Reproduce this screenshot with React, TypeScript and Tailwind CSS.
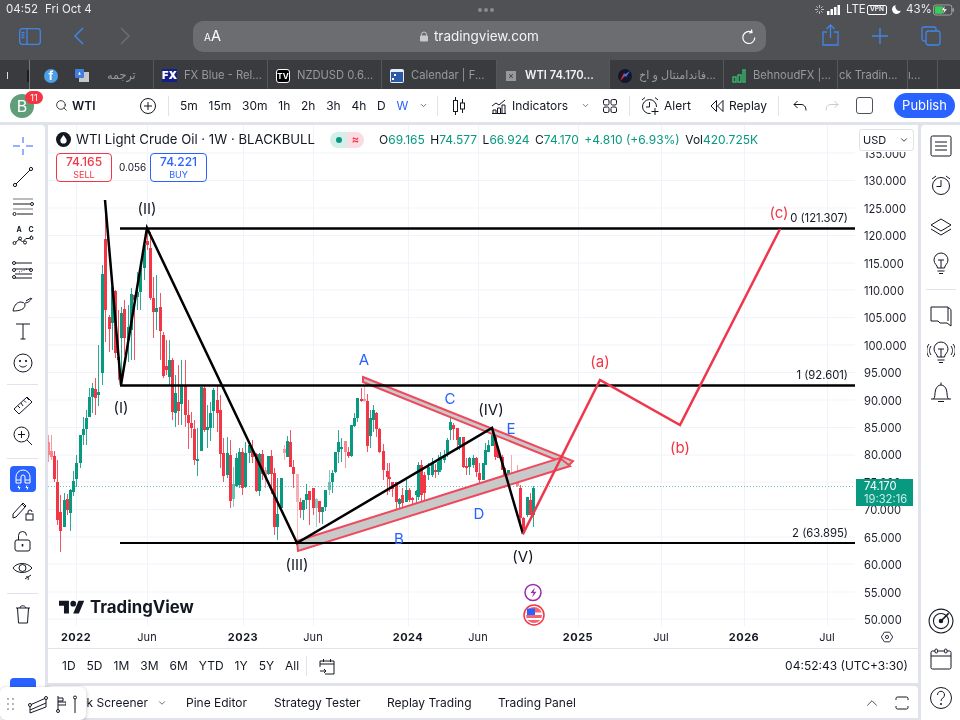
import { ReactNode } from "react";
import { ChevronDown, ChevronUp, Search } from "lucide-react";

const BLUE = "#3f86e8";
const GREEN = "#089981";
const RED = "#f23645";

// x, wick top, body top, body bottom, wick bottom, colour, faded
type Candle = [number, number, number, number, number, "g" | "r", number?];

const CANDLES: Candle[] = [
  [48, 435, 442, 455, 462, "r", 0.6],
  [51, 435, 451, 457, 460, "r", 0.6],
  [54, 451, 456, 479, 482, "r"],
  [57, 460, 482, 520, 525, "r"],
  [60, 495, 512, 531, 552, "r"],
  [64, 493, 500, 527, 527, "g"],
  [67, 494, 499, 510, 515, "r"],
  [70, 489, 490, 513, 531, "g"],
  [73, 471, 481, 492, 496, "g"],
  [76, 455, 463, 479, 487, "g"],
  [80, 435, 435, 463, 468, "g"],
  [83, 417, 429, 435, 445, "g"],
  [86, 410, 418, 429, 445, "g"],
  [89, 388, 397, 417, 417, "g"],
  [92, 383, 388, 397, 413, "g"],
  [95, 378, 389, 398, 415, "r"],
  [98, 345, 392, 395, 406, "g"],
  [102, 265, 274, 373, 385, "g"],
  [105, 205, 239, 310, 342, "r"],
  [109, 315, 317, 329, 352, "r"],
  [112, 277, 287, 323, 350, "g"],
  [115, 290, 291, 353, 358, "r"],
  [118, 310, 357, 360, 380, "r"],
  [121, 307, 313, 338, 375, "g"],
  [124, 300, 309, 338, 355, "r"],
  [128, 305, 327, 340, 362, "g"],
  [131, 288, 294, 330, 360, "g"],
  [134, 295, 295, 300, 360, "r"],
  [137, 272, 292, 297, 310, "g"],
  [140, 265, 268, 292, 310, "g"],
  [144, 240, 245, 268, 280, "g"],
  [147, 228, 241, 245, 250, "r"],
  [150, 232, 248, 298, 300, "r"],
  [153, 277, 298, 312, 338, "r"],
  [156, 275, 308, 312, 330, "g"],
  [160, 293, 307, 331, 360, "r"],
  [163, 332, 335, 376, 378, "r"],
  [166, 340, 366, 370, 375, "r"],
  [169, 340, 360, 377, 385, "g"],
  [172, 358, 360, 412, 420, "r"],
  [175, 375, 393, 413, 427, "g"],
  [178, 365, 402, 411, 425, "r"],
  [181, 360, 386, 404, 425, "g"],
  [185, 360, 385, 415, 427, "r"],
  [188, 400, 415, 423, 449, "r"],
  [191, 412, 423, 428, 438, "r"],
  [194, 420, 429, 460, 465, "r"],
  [197, 428, 459, 461, 476, "g"],
  [201, 387, 387, 451, 451, "g"],
  [204, 386, 388, 430, 432, "r"],
  [207, 405, 427, 430, 448, "g"],
  [210, 402, 413, 428, 441, "g"],
  [213, 388, 390, 411, 428, "g"],
  [217, 385, 400, 413, 432, "r"],
  [220, 395, 410, 454, 468, "r"],
  [223, 438, 453, 476, 482, "r"],
  [227, 437, 453, 475, 478, "g"],
  [230, 440, 455, 501, 508, "r"],
  [233, 467, 484, 499, 507, "g", 0.6],
  [236, 453, 458, 486, 487, "g"],
  [239, 448, 452, 485, 488, "g"],
  [242, 448, 452, 488, 495, "r"],
  [245, 442, 453, 487, 488, "g"],
  [249, 445, 445, 453, 463, "g"],
  [252, 440, 450, 457, 463, "r"],
  [256, 453, 454, 491, 492, "r"],
  [259, 453, 454, 491, 496, "g"],
  [262, 450, 454, 474, 480, "r"],
  [265, 467, 470, 477, 488, "r", 0.6],
  [268, 456, 456, 474, 475, "g"],
  [271, 450, 456, 474, 494, "r"],
  [274, 468, 473, 527, 535, "r"],
  [277, 478, 514, 527, 540, "g"],
  [281, 478, 478, 508, 509, "g"],
  [284, 445, 449, 453, 460, "r", 0.5],
  [287, 436, 441, 457, 455, "g"],
  [290, 430, 442, 467, 467, "r"],
  [293, 460, 467, 474, 488, "r"],
  [297, 474, 474, 502, 543, "r", 0.4],
  [300, 498, 502, 510, 518, "r"],
  [303, 500, 500, 510, 520, "g"],
  [306, 484, 494, 500, 509, "g"],
  [309, 491, 491, 500, 525, "r"],
  [313, 488, 488, 508, 515, "r"],
  [316, 498, 499, 508, 527, "g", 0.5],
  [319, 501, 501, 512, 523, "r"],
  [322, 507, 507, 512, 524, "g"],
  [325, 490, 490, 507, 511, "g"],
  [329, 470, 482, 490, 495, "g", 0.6],
  [332, 470, 473, 482, 493, "g"],
  [335, 452, 452, 472, 473, "g"],
  [338, 430, 442, 452, 463, "g"],
  [341, 438, 447, 449, 462, "g"],
  [345, 441, 441, 452, 468, "r", 0.6],
  [348, 447, 452, 456, 458, "r"],
  [351, 425, 425, 456, 457, "g"],
  [354, 413, 418, 426, 427, "g"],
  [357, 398, 398, 418, 422, "g"],
  [361, 388, 399, 401, 402, "r"],
  [364, 385, 399, 401, 402, "r", 0.5],
  [367, 394, 401, 446, 452, "r"],
  [370, 410, 418, 436, 448, "g"],
  [373, 405, 410, 420, 432, "g"],
  [376, 412, 413, 429, 437, "r"],
  [379, 428, 429, 452, 453, "r"],
  [383, 444, 451, 470, 480, "r"],
  [387, 463, 471, 477, 495, "r"],
  [389, 463, 477, 479, 492, "r"],
  [392, 482, 482, 489, 497, "r"],
  [396, 482, 482, 502, 513, "r"],
  [399, 498, 499, 504, 520, "g"],
  [402, 488, 495, 503, 508, "r"],
  [406, 480, 490, 502, 502, "g"],
  [409, 488, 490, 500, 502, "r"],
  [412, 497, 498, 500, 512, "r"],
  [416, 490, 491, 495, 505, "g"],
  [418, 462, 465, 497, 500, "g"],
  [421, 460, 465, 495, 503, "r"],
  [424, 472, 475, 493, 500, "r"],
  [428, 463, 467, 475, 480, "g"],
  [432, 458, 463, 475, 477, "g"],
  [435, 464, 470, 472, 478, "r"],
  [438, 455, 462, 472, 475, "g"],
  [440, 452, 457, 470, 472, "g"],
  [444, 450, 455, 460, 463, "g"],
  [447, 438, 440, 453, 457, "g"],
  [450, 417, 422, 430, 440, "g"],
  [453, 423, 425, 429, 440, "r"],
  [457, 428, 428, 440, 450, "r"],
  [459, 437, 437, 445, 450, "g"],
  [463, 437, 437, 467, 468, "r"],
  [466, 458, 466, 468, 475, "r"],
  [469, 457, 458, 467, 475, "g"],
  [473, 455, 458, 465, 468, "g"],
  [476, 457, 458, 472, 477, "r"],
  [479, 463, 473, 480, 495, "r"],
  [483, 463, 463, 480, 480, "g"],
  [485, 443, 450, 465, 465, "g"],
  [488, 440, 445, 452, 452, "g"],
  [492, 433, 435, 446, 446, "g"],
  [495, 436, 437, 457, 460, "r"],
  [498, 447, 450, 458, 458, "r"],
  [502, 455, 457, 470, 470, "r"],
  [504, 467, 468, 487, 488, "r"],
  [508, 470, 470, 485, 485, "g"],
  [511, 455, 473, 478, 475, "r", 0.5],
  [514, 473, 477, 482, 484, "r"],
  [517, 465, 477, 486, 487, "r", 0.6],
  [520, 485, 488, 518, 527, "r"],
  [523, 517, 518, 533, 535, "r"],
  [527, 497, 497, 515, 517, "g"],
  [530, 493, 500, 515, 515, "r"],
  [533, 486, 488, 515, 527, "g"],
];

const PRICES = [
  "135.000", "130.000", "125.000", "120.000", "115.000", "110.000", "105.000", "100.000", "95.000",
  "90.000", "85.000", "80.000", "75.000", "70.000", "65.000", "60.000", "55.000", "50.000",
];

const GRID_Y = [153, 180.5, 208, 235.5, 263, 290, 317.5, 345, 372.5, 400, 427.5, 455, 482, 509.5, 537, 564, 592, 619];
const GRID_X = [76, 147, 243, 313, 408, 478, 578, 661, 744, 827];

const TIME_LABELS: [number, string, boolean][] = [
  [76, "2022", true], [147, "Jun", false], [243, "2023", true], [313, "Jun", false], [408, "2024", true],
  [478, "Jun", false], [578, "2025", true], [661, "Jul", false], [744, "2026", true], [827, "Jul", false],
];

const NOTES: [number, number, string, string][] = [
  [121, 413, "(I)", "#131722"], [147, 214, "(II)", "#131722"], [297, 570, "(III)", "#131722"],
  [491, 415, "(IV)", "#131722"], [523, 562, "(V)", "#131722"],
  [364, 365, "A", "#2962ff"], [399, 544, "B", "#2962ff"], [450, 404, "C", "#2962ff"],
  [479, 519, "D", "#2962ff"], [511, 434, "E", "#2962ff"],
  [600, 367, "(a)", RED], [680, 453, "(b)", RED], [779, 218, "(c)", RED],
];

function Ico({ children, className = "" }: { children: ReactNode; className?: string }) {
  return (
    <svg viewBox="0 0 24 24" fill="none" stroke="currentColor" strokeWidth="1" className={`h-[24px] w-[24px] shrink-0 text-[#131722] ${className}`}>
      {children}
    </svg>
  );
}

function Candles() {
  return (
    <>
      {CANDLES.map(([x, wt, bt, bb, wb, c, faded], i) => {
        const col = c === "g" ? GREEN : RED;
        return (
          <g key={i} fill={col} opacity={faded ?? 1}>
            <rect x={x} y={wt} width="1" height={wb - wt} opacity="0.85" />
            <rect x={x - 1} y={bt} width="3" height={Math.max(bb - bt, 1)} />
          </g>
        );
      })}
    </>
  );
}

function Chart() {
  return (
    <svg viewBox="48 125 807 524" className="h-[524px] w-[807px] shrink-0">
      {GRID_Y.map((y) => (
        <line key={y} x1="48" x2="855" y1={y} y2={y} stroke="#f0f3fa" />
      ))}
      {GRID_X.map((x) => (
        <line key={x} x1={x + 0.5} x2={x + 0.5} y1="125" y2="626" stroke="#f0f3fa" />
      ))}
      <line x1="48" x2="855" y1="486.5" y2="486.5" stroke={GREEN} strokeOpacity="0.6" strokeDasharray="1 2" />
      <Candles />

      <polygon points="363,377 573,461 569,465 363,382" fill="#c9c9c9" stroke="#f0485c" strokeWidth="2" />
      <polygon points="297,541 560,458 570,466 298,551" fill="#c9c9c9" stroke="#f0485c" strokeWidth="2" />

      <line x1="120" x2="856" y1="228.5" y2="228.5" stroke="#000" strokeWidth="2.5" />
      <line x1="120" x2="856" y1="385.5" y2="385.5" stroke="#000" strokeWidth="2.5" />
      <line x1="120" x2="856" y1="543" y2="543" stroke="#000" strokeWidth="2" />
      <polyline points="105,200 121,385 147,228 297,543 492,428 523,534" fill="none" stroke="#000" strokeWidth="2.5" />
      <polyline points="523,534 600,380 680,425 780,229" fill="none" stroke="#f0364c" strokeWidth="2.5" />

      <g fontSize="11.3" fill="#131722" textAnchor="end">
        <text x="848" y="222">0 (121.307)</text>
        <text x="848" y="379">1 (92.601)</text>
        <text x="848" y="537">2 (63.895)</text>
      </g>
      <g fontSize="15" textAnchor="middle">
        {NOTES.map(([x, y, t, c]) => (
          <text key={t} x={x} y={y} fill={c}>{t}</text>
        ))}
      </g>

      {/* watermark */}
      <g transform="translate(59 598) scale(0.71)" fill="#131722">
        <path d="M14 22H7V11H0V4h14v18zM28 22h-8l7.5-18h8L28 22z" />
        <circle cx="20" cy="8" r="4" />
      </g>
      <text x="90" y="613" fontSize="16.8" fontWeight="700" fill="#131722">TradingView</text>

      {/* events */}
      <circle cx="533" cy="592.5" r="8" fill="#fff" stroke="#9c27b0" strokeWidth="1.5" />
      <path d="M535 587.5l-4.5 5.5h3l-1.5 4.5 4.5-5.7h-3z" fill="#9c27b0" />
      <circle cx="534" cy="615" r="10" fill="#fff" stroke={RED} strokeWidth="1.5" />
      <circle cx="534" cy="615" r="8" fill="#f4656f" />
      <rect x="526" y="612.5" width="16" height="2.5" fill="#fff" />
      <rect x="526" y="618" width="16" height="2" fill="#fff" />
      <rect x="527" y="608.5" width="8" height="6.5" fill="#2962ff" />

      <g fontSize="11" fill="#131722" textAnchor="middle">
        {TIME_LABELS.map(([x, t, bold]) => (
          <text key={x} x={x} y="641" fontWeight={bold ? 700 : 400} letterSpacing={bold ? 0.5 : 0}>{t}</text>
        ))}
      </g>
    </svg>
  );
}

function PriceAxis() {
  return (
    <div className="relative h-[524px] w-[63px] shrink-0 overflow-hidden">
      <div className="flex flex-col pl-[9px] pt-[16px] text-[11.2px] leading-[27.42px] text-[#1e222d]">
        {PRICES.map((p) => (
          <span key={p} className="h-[27.42px]">{p}</span>
        ))}
      </div>
      <div className="absolute left-0 top-0 h-[27px] w-full bg-white" />
      <div className="absolute left-[4px] top-[4px] flex h-[22px] w-[55px] items-center justify-between rounded-[3px] border border-[#e0e3eb] bg-white pl-[3px] pr-[4px] text-[11px] text-[#131722]">
        USD
        <ChevronDown size={10} strokeWidth={2} />
      </div>
      <div className="absolute left-[1px] top-[354px] flex h-[27px] w-[57px] flex-col bg-[#089981] pl-[8px] text-[11.2px] leading-[13px] text-white">
        <span className="mt-[1px]">74.170</span>
        <span className="text-[#c9ece5]">19:32:16</span>
      </div>
      <svg viewBox="0 0 16 16" className="absolute left-[25px] top-[505px] h-[14px] w-[14px]" fill="none" stroke="#131722" strokeWidth="1">
        <path d="M5 2.500h6L14.500 8 11 13.500H5L1.500 8z" />
        <circle cx="8" cy="8" r="1.800" />
      </svg>
    </div>
  );
}

function LeftTools() {
  return (
    <div className="flex w-[45px] shrink-0 flex-col items-center rounded-tr-[4px] bg-white">
      <Ico className="mt-[9px] !text-[#2962ff]"><path d="M12 3v6M12 15v6M2 12h7M15 12h7" /></Ico>
      <Ico className="mt-[7px]"><path d="M5 19L19 5" /><circle cx="4" cy="20" r="1.600" /><circle cx="20" cy="4" r="1.600" /></Ico>
      <Ico className="mt-[6px]"><path d="M2 4h20M2 14h20" stroke="#777" /><path d="M2 9h17M6 19h16" /><circle cx="21" cy="9" r="1.500" /><circle cx="3.500" cy="19" r="1.500" /></Ico>
      <div className="relative mt-[6px] h-[24px] w-[24px]">
        <Ico><path d="M4.500 17.500L8.500 14l3 3 3.500-3.500 3.500 0 2-3" /><circle cx="3.500" cy="18" r="1.500" /><circle cx="9" cy="13.500" r="1.500" /><circle cx="14" cy="17.500" r="1.500" /><circle cx="20.500" cy="13" r="1.500" /></Ico>
        <span className="absolute left-[6px] top-[1px] text-[7px] font-bold leading-[8px] text-[#131722]">A</span>
        <span className="absolute left-[18px] top-[1px] text-[7px] font-bold leading-[8px] text-[#131722]">C</span>
      </div>
      <Ico className="mt-[9px]"><path d="M4 5h17M4 11h16M4 16h17M4 20h17" /><path d="M8 14l8-3" strokeDasharray="1 1.500" /><circle cx="3" cy="5" r="1.500" /><circle cx="3" cy="12" r="1.500" /><circle cx="20" cy="12" r="1.500" /><circle cx="3" cy="19" r="1.500" /></Ico>
      <Ico className="mt-[9px]"><path d="M2 20c1-5 3-8 7-9 3 0 5 1 5 3 0 4-5 6-12 6z" /><path d="M15 10l5-3M14 12c3 0 5-2 7-5" /></Ico>
      <Ico className="mt-[4px]"><path d="M5 5h14M12 5v15M9.500 20h5" /></Ico>
      <Ico className="mt-[8px]"><circle cx="12" cy="12" r="9" /><circle cx="9" cy="10" r="0.700" fill="currentColor" /><circle cx="15" cy="10" r="0.700" fill="currentColor" /><path d="M8.500 14.500c2 2 5 2 7 0" /></Ico>
      <div className="mt-[9px] h-px w-[31px] bg-[#e0e3eb]" />
      <Ico className="mt-[8px]"><path d="M3 16L16 4l5 5L8 21z" /><path d="M7 13l2 2M10 10l2 3M13 7.500l2 2M16 5l2 2" /></Ico>
      <Ico className="mt-[7px]"><circle cx="10.500" cy="10.500" r="7.500" /><path d="M16 16l5 5M10.500 7v7M7 10.500h7" /></Ico>
      <div className="mt-[10px] h-px w-[31px] bg-[#e0e3eb]" />
      <div className="mt-[7px] flex h-[26px] w-[26px] items-center justify-center rounded-[4px] bg-[#2962ff]">
        <Ico className="!text-white"><path d="M5 16V10a7 7 0 0114 0v6h-5v-6a2 2 0 00-4 0v6zM5 13h5M14 13h5M8 18.500l-1 2h2l-1 2M16 18.500l-1 2h2l-1 2" /></Ico>
      </div>
      <Ico className="mt-[6px]"><path d="M2 16L12 5l3 3L5 19l-3 1zM11 6l3 3" /><rect x="15" y="16" width="7" height="6" /><path d="M17 16v-2a2 2 0 014 0" /></Ico>
      <Ico className="mt-[7px]"><rect x="4" y="11" width="15" height="11" rx="2" /><path d="M7.500 11V6.500a4 4 0 018 0" /><path d="M11.500 15v2.500" strokeWidth="1.600" /></Ico>
      <Ico className="mt-[6px]"><path d="M2 9c4-6 14-6 19 0-5 6-15 6-19 0z" /><circle cx="11.500" cy="9" r="3.500" /><path d="M14 20l6-4M15 18c2-1 3 1 2 3" /></Ico>
      <div className="mt-[10px] h-px w-[31px] bg-[#e0e3eb]" />
      <Ico className="mt-[8px]"><path d="M5 6h14M9 6c0-3 5-3 6 0M6.500 6l1 15h9l1-15" /></Ico>
      <div className="mt-[52px] h-[20px] w-[26px] shrink-0 rounded-[4px] bg-[#2962ff]" />
    </div>
  );
}

function RightTools() {
  return (
    <div className="flex flex-1 flex-col items-center rounded-tl-[4px] bg-white pb-[10px]">
      <Ico className="mt-[9px]"><rect x="2" y="2" width="20" height="20" rx="1.500" /><path d="M6 8h12M6 12h12M6 16h12" /></Ico>
      <Ico className="mt-[15px]"><circle cx="12" cy="13" r="8.500" /><path d="M12 7v6.500H7.500M3 6l4-3M21 6l-4-3" /></Ico>
      <Ico className="mt-[17px]"><path d="M12 5l10 6-10 6-10-6z" /><path d="M2 15l10 6 10-6" /></Ico>
      <Ico className="mt-[13px]"><path d="M8.500 17c0-3-3.500-4-3.500-8a7 7 0 0114 0c0 4-3.500 5-3.500 8zM8.500 20h7M10 22.500h4M9 9h6M12 9v8" /></Ico>
      <div className="mt-[14px] h-px w-[30px] bg-[#e0e3eb]" />
      <Ico className="mt-[14px]"><path d="M2 17V3h17v14M2 17h7l2 2M19 4c2 0 3 1 3 3v15l-4-3h-7" /></Ico>
      <svg viewBox="0 0 28 24" fill="none" stroke="#131722" className="mt-[12px] h-[24px] w-[28px]">
        <path d="M10.500 17c0-3-3.500-4-3.500-8a7 7 0 0114 0c0 4-3.500 5-3.500 8zM10.500 20h7M12 22.500h4M11 9h6M14 9v8M4 6c-2 3-2 6 0 9M2 4c-3 4-3 9 0 13M24 6c2 3 2 6 0 9M26 4c3 4 3 9 0 13" />
      </svg>
      <Ico className="mt-[16px]"><path d="M2 19h20M4.500 19c2-2 1-5 2-9 1-3 3-5 5.500-5s4.500 2 5.500 5c1 4 0 7 2 9M9 21.500h6M12 5V2.500" /></Ico>
      <Ico className="mt-auto !h-[26px] !w-[26px]"><circle cx="12" cy="12" r="11" /><circle cx="12" cy="12" r="7" /><circle cx="12" cy="12" r="1.600" fill="currentColor" /><path d="M12 12l7-7" strokeWidth="1.500" /></Ico>
      <Ico className="mt-[13px]"><rect x="2" y="4" width="20" height="18" rx="1.500" /><path d="M2 9h20" /><rect x="6" y="2" width="2.500" height="4" rx="1.200" fill="#fff" /><rect x="15.500" y="2" width="2.500" height="4" rx="1.200" fill="#fff" /></Ico>
      <Ico className="mt-[15px]"><circle cx="12" cy="12" r="10.500" /><path d="M8.500 9c0-5 7-5 7 0 0 3-3.500 3-3.500 6" /><circle cx="12" cy="18" r="0.600" fill="currentColor" /></Ico>
    </div>
  );
}

function StatusBar() {
  return (
    <div className="flex h-[18px] items-center pt-[1px] text-[11.5px] text-[#eeeeef]">
      <span className="ml-[6px] w-[39px]">04:52</span>
      <span>Fri Oct 4</span>
      <div className="ml-[386px] flex gap-[2px]">
        <span className="h-[4px] w-[4px] rounded-full bg-[#8b8c90]" />
        <span className="h-[4px] w-[4px] rounded-full bg-[#8b8c90]" />
        <span className="h-[4px] w-[4px] rounded-full bg-[#8b8c90]" />
      </div>
      <div className="ml-auto mr-[5px] flex items-center text-[11.5px]">
        <svg viewBox="0 0 10 10" className="mr-[3px] h-[9px] w-[9px]" stroke="#ccc" strokeWidth="1">
          <path d="M5 0v3M5 7v3M0 5h3M7 5h3M1.500 1.500l2 2M6.500 6.500l2 2M8.500 1.500l-2 2M3.500 6.500l-2 2" />
        </svg>
        <svg viewBox="0 0 15 10" className="mr-[4px] h-[10px] w-[15px]" fill="#fff">
          <rect x="0" y="6" width="2.500" height="4" /><rect x="3.500" y="4" width="2.500" height="6" />
          <rect x="7" y="2" width="2.500" height="8" /><rect x="10.500" y="0" width="2.500" height="10" />
        </svg>
        <span className="w-[21px]">LTE</span>
        <span className="flex h-[10px] w-[20px] items-center justify-center rounded-[2px] border border-white text-[6.500px] font-bold">VPN</span>
        <svg viewBox="0 0 10 10" className="ml-[5px] mr-[5px] h-[9px] w-[9px]" fill="#fff">
          <path d="M4 0a5 5 0 105.800 6.500A5 5 0 014 0z" />
        </svg>
        <span className="w-[27px]">43%</span>
        <svg viewBox="0 0 24 12" className="h-[12px] w-[22px]" fill="none">
          <rect x="0.500" y="0.500" width="20" height="11" rx="2.500" stroke="#aaa" />
          <rect x="2" y="2" width="9" height="8" rx="1" fill="#3ccb5a" />
          <path d="M22 4v4" stroke="#aaa" strokeWidth="1.500" />
          <path d="M13 1l-4 5.500h3L10.500 11l5-6h-3z" fill="#fff" stroke="#505155" strokeWidth="0.500" />
        </svg>
      </div>
    </div>
  );
}

function SafariBar() {
  return (
    <div className="flex h-[42px] items-start text-[#fff]">
      <svg viewBox="0 0 22 17" className="ml-[19px] mt-[10px] h-[17px] w-[22px]" fill="none" stroke={BLUE} strokeWidth="1.300">
        <rect x="0.700" y="0.700" width="20.600" height="15.600" rx="2.500" />
        <path d="M8 1v15M2.500 4.500h3M2.500 7h3M2.500 9.500h3" />
      </svg>
      <svg viewBox="0 0 10 18" className="ml-[33px] mt-[9px] h-[18px] w-[10px]" fill="none" stroke={BLUE} strokeWidth="1.500">
        <path d="M9 1L1 9l8 8" />
      </svg>
      <svg viewBox="0 0 10 18" className="ml-[36px] mt-[9px] h-[18px] w-[10px]" fill="none" stroke="#6e6f73" strokeWidth="1.500">
        <path d="M1 1l8 8-8 8" />
      </svg>
      <div className="ml-[63px] mt-[3px] flex h-[31px] w-[573px] items-center rounded-[10px] bg-[#6c6d71] pl-[11px] pr-[9px]">
        <span className="text-[10px] leading-none">A</span>
        <span className="text-[14.500px] leading-none">A</span>
        <div className="ml-[199px] flex items-center gap-[6px] text-[13.500px] text-[#f4f4f4]">
          <svg viewBox="0 0 8 10" className="h-[11px] w-[8px]" fill="#c9c9cb">
            <rect x="0" y="4" width="8" height="6" rx="1" />
            <path d="M1.500 4.500V3a2.500 2.500 0 015 0v1.500" fill="none" stroke="#c9c9cb" strokeWidth="1" />
          </svg>
          tradingview.com
        </div>
        <svg viewBox="0 0 16 16" className="ml-auto h-[16px] w-[16px]" fill="none" stroke="#fff" strokeWidth="1.200">
          <path d="M13.800 8.500a6 6 0 11-3-5.200M10.500 0.500l.5 3-3 .5" />
        </svg>
      </div>
      <svg viewBox="0 0 17 22" className="ml-[56px] mt-[6px] h-[22px] w-[17px]" fill="none" stroke={BLUE} strokeWidth="1.300">
        <path d="M5 8H1v13h15V8h-4M8.500 14V1M4.500 5l4-4 4 4" />
      </svg>
      <svg viewBox="0 0 16 16" className="ml-[33px] mt-[10px] h-[16px] w-[16px]" fill="none" stroke={BLUE} strokeWidth="1.400">
        <path d="M8 0v16M0 8h16" />
      </svg>
      <svg viewBox="0 0 20 20" className="ml-[33px] mt-[8px] h-[20px] w-[20px]" fill="none" stroke={BLUE} strokeWidth="1.300">
        <rect x="5" y="5" width="14" height="14" rx="2.500" />
        <path d="M5 15H3a2 2 0 01-2-2V3a2 2 0 012-2h10a2 2 0 012 2v2" />
      </svg>
    </div>
  );
}

function Tab({ w, active, icon, children }: { w: string; active?: boolean; icon?: ReactNode; children: ReactNode }) {
  return (
    <div className={`${w} flex h-full shrink-0 items-center gap-[7px] overflow-hidden whitespace-nowrap border-r border-[#56575b] pl-[8px] pt-[2px] ${active ? "bg-[#505155] font-semibold text-[#f1f1f2]" : "text-[#98999c]"}`}>
      {icon}
      {children}
    </div>
  );
}

function TabsBar() {
  return (
    <div className="flex h-[29px] items-center bg-[#3a3b3f] text-[11.2px]">
      <div className="flex h-full w-[30px] shrink-0 items-center border-r border-[#77787c] pt-[2px]">
        <span className="ml-[7px] h-[7px] w-px bg-[#ddd]" />
        <span className="ml-[19px] h-[12px] w-[2px] bg-[#1b1c20]" />
      </div>
      <div className="flex h-full w-[124px] shrink-0 items-center border-r border-[#56575b] pt-[2px]">
        <span className="ml-[14px] flex h-[14px] w-[14px] items-center justify-center rounded-full bg-[#4b9ee8] text-[12px] font-bold text-white">f</span>
        <svg viewBox="0 0 14 14" className="ml-[17px] h-[14px] w-[14px]">
          <rect x="4" y="3" width="10" height="10" fill="#c7c8ca" />
          <rect x="0" y="0" width="9" height="9" rx="1" fill="#3f7fe0" />
          <path d="M3 5h3M4.500 3v3" stroke="#fff" strokeWidth="0.800" />
        </svg>
        <span className="ml-[18px] text-[#98999c]">ترجمه</span>
      </div>
      <Tab w="w-[114px]" icon={<span className="flex h-[13px] w-[15px] shrink-0 items-center justify-center bg-[#14208a] text-[11px] font-black text-white">FX</span>}>FX Blue - Rel...</Tab>
      <Tab w="w-[114px]" icon={<span className="flex h-[14px] w-[14px] shrink-0 items-center justify-center rounded-[3px] border border-white bg-black text-[8px] font-bold text-white">TV</span>}>NZDUSD 0.6...</Tab>
      <Tab
        w="w-[115px]"
        icon={
          <svg viewBox="0 0 14 14" className="h-[14px] w-[14px] shrink-0">
            <rect width="14" height="14" rx="2" fill="#e8eef7" />
            <rect x="1" y="3" width="12" height="10" fill="#2a5aa8" />
            <rect x="4" y="5" width="2" height="2" fill="#fff" />
            <rect x="2" y="9" width="2" height="2" fill="#fff" />
          </svg>
        }
      >
        Calendar | F...
      </Tab>
      <Tab
        w="w-[113px]"
        active
        icon={
          <span className="ml-[1px] mr-[2px] flex h-[10px] w-[10px] shrink-0 items-center justify-center bg-[#98999c] text-[9px] font-normal leading-none text-[#3a3b3f]">×</span>
        }
      >
        WTI 74.170...
      </Tab>
      <Tab
        w="w-[114px]"
        icon={
          <svg viewBox="0 0 14 14" className="h-[14px] w-[14px] shrink-0">
            <circle cx="7" cy="7" r="7" fill="#16162e" />
            <path d="M2 12L8 6l-2-2z" fill="#e5343f" />
            <path d="M12 2L8 8 6 6z" fill="#2f7fe8" />
          </svg>
        }
      >
        فاندامنتال و اخ...
      </Tab>
      <Tab
        w="w-[114px]"
        icon={
          <svg viewBox="0 0 14 14" className="h-[14px] w-[14px] shrink-0" fill="none" stroke="#39b26a" strokeWidth="1.500">
            <path d="M1 8h3v5H1zM6 6h3v7H6zM11 1h2v12h-2z" />
          </svg>
        }
      >
        BehnoudFX |...
      </Tab>
      <div className="flex h-full w-[70px] shrink-0 items-center overflow-hidden border-r border-[#56575b] pl-[1px] pt-[2px] text-[#98999c]">ck Tradin...</div>
      <div className="flex h-full w-[30px] shrink-0 items-center overflow-hidden border-r border-[#56575b] pt-[2px] text-[#98999c]">ı...</div>
    </div>
  );
}

function TVHeader() {
  return (
    <div className="flex h-[33px] items-center bg-white text-[12px] text-[#131722]">
      <div className="relative ml-[10px] flex h-[24px] w-[24px] shrink-0 items-center justify-center rounded-full bg-[#5f9e78] text-[16px] text-white">
        B
        <span className="absolute left-[15px] top-[-3px] flex h-[13px] w-[18px] items-center justify-center rounded-full bg-[#f23645] text-[9px] leading-none text-white">11</span>
      </div>
      <Search size={13} strokeWidth={1.5} className="ml-[21px]" />
      <span className="ml-[4px] w-[24px] font-semibold">WTI</span>
      <svg viewBox="0 0 16 16" className="ml-[44px] h-[16px] w-[16px]" fill="none" stroke="#131722">
        <circle cx="8" cy="8" r="7.500" />
        <path d="M8 4v8M4 8h8" />
      </svg>
      <div className="ml-[12px] h-[20px] w-px bg-[#e0e3eb]" />
      <div className="ml-[11px] flex w-[249px] items-center gap-[10.750px]">
        <span>5m</span><span>15m</span><span>30m</span><span>1h</span><span>2h</span><span>3h</span><span>4h</span><span>D</span>
        <span className="text-[#2962ff]">W</span>
        <ChevronDown size={9} strokeWidth={1.5} />
      </div>
      <div className="ml-[8px] h-[20px] w-px bg-[#e0e3eb]" />
      <svg viewBox="0 0 14 18" className="ml-[14px] h-[18px] w-[14px]" fill="none" stroke="#131722">
        <path d="M3.500 0v18M10.500 2v14" />
        <rect x="1.500" y="3.500" width="4" height="11" fill="#fff" />
        <rect x="8.500" y="6" width="4" height="6" fill="#fff" />
      </svg>
      <svg viewBox="0 0 16 16" className="ml-[25px] h-[16px] w-[16px]" fill="none" stroke="#131722">
        <path d="M1 8l4-3 3 2 6-5M1 15.500h14M2 15v-3h3v3M6.500 15v-5h3v5M11 15V7h3v8" />
      </svg>
      <span className="ml-[5px] w-[57px]">Indicators</span>
      <ChevronDown size={9} strokeWidth={1.5} className="ml-[12px]" />
      <svg viewBox="0 0 14 14" className="ml-[13px] h-[14px] w-[14px]" fill="none" stroke="#131722">
        <rect x="0.500" y="0.500" width="5.500" height="5.500" rx="1.500" /><rect x="8" y="0.500" width="5.500" height="5.500" rx="1.500" />
        <rect x="0.500" y="8" width="5.500" height="5.500" rx="1.500" /><rect x="8" y="8" width="5.500" height="5.500" rx="1.500" />
      </svg>
      <div className="ml-[12px] h-[20px] w-px bg-[#e0e3eb]" />
      <svg viewBox="0 0 18 18" className="ml-[11px] h-[18px] w-[18px]" fill="none" stroke="#131722">
        <path d="M15.500 10a7 7 0 10-6 6.500M8.500 5v5H5M1 3l3-2.500M17 3L14 .5M14 11v7M10.500 14.500h7" />
      </svg>
      <span className="ml-[5px] w-[27px]">Alert</span>
      <svg viewBox="0 0 14 14" className="ml-[19px] h-[14px] w-[14px]" fill="none" stroke="#131722">
        <path d="M6.500 1.500L1 7l5.500 5.500zM13 1.500L7.500 7l5.500 5.500z" />
      </svg>
      <span className="ml-[5px] w-[39px]">Replay</span>
      <div className="ml-[10px] h-[20px] w-px bg-[#e0e3eb]" />
      <svg viewBox="0 0 14 12" className="ml-[14px] h-[12px] w-[14px]" fill="none" stroke="#131722">
        <path d="M4.500 1L1 4.500 4.500 8M1 4.500h7c3 0 5 2 5 6" />
      </svg>
      <svg viewBox="0 0 14 12" className="ml-[18px] h-[12px] w-[14px]" fill="none" stroke="#c9cbd1">
        <path d="M9.500 1L13 4.500 9.500 8M13 4.500H6c-3 0-5 2-5 6" />
      </svg>
      <span className="ml-[17px] h-[17px] w-[17px] rounded-[3px] border border-[#50535e]" />
      <span className="ml-auto mr-[5px] flex h-[25px] w-[61px] shrink-0 items-center justify-center rounded-full bg-[#2962ff] text-[13px] text-white">Publish</span>
    </div>
  );
}

function Legend() {
  return (
    <div className="absolute left-[8px] top-[6px] text-[#131722]">
      <div className="flex h-[17px] items-center text-[13.200px]">
        <span className="flex h-[15px] w-[15px] items-center justify-center rounded-full bg-[#131722]">
          <svg viewBox="0 0 10 10" className="h-[9px] w-[9px]" fill="#fff">
            <path d="M5 0c2 3 3.500 4.500 3.500 6a3.500 3.500 0 01-7 0C1.500 4.500 3 3 5 0z" />
          </svg>
        </span>
        <span className="ml-[5px] w-[254px] whitespace-nowrap">WTI Light Crude Oil · 1W · BLACKBULL</span>
        <span className="flex h-[16px] w-[17px] items-center justify-center rounded-l-full bg-[#d4efe9]">
          <span className="h-[6px] w-[6px] rounded-full bg-[#089981]" />
        </span>
        <span className="flex h-[16px] w-[17px] items-center justify-center rounded-r-full bg-[#fbdce2] text-[11px] font-bold text-[#f23645]">≈</span>
        <div className="ml-[15px] flex gap-[5.500px] whitespace-nowrap text-[12px]">
          <span>O<span className="text-[#089981]">69.165</span></span>
          <span>H<span className="text-[#089981]">74.577</span></span>
          <span>L<span className="text-[#089981]">66.924</span></span>
          <span>C<span className="text-[#089981]">74.170</span></span>
          <span className="text-[#089981]">+4.810 (+6.93%)</span>
          <span>Vol<span className="text-[#089981]">420.725K</span></span>
        </div>
      </div>
      <div className="mt-[5px] flex items-center">
        <div className="flex h-[29px] w-[56px] flex-col items-center justify-center rounded-[4px] border border-[#f23645] bg-white leading-none text-[#f23645]">
          <span className="text-[12px] font-medium">74.165</span>
          <span className="mt-[2px] text-[9px]">SELL</span>
        </div>
        <span className="ml-[7px] w-[31px] text-[10px]">0.056</span>
        <div className="flex h-[29px] w-[57px] flex-col items-center justify-center rounded-[4px] border border-[#2962ff] bg-white leading-none text-[#2962ff]">
          <span className="text-[12px] font-medium">74.221</span>
          <span className="mt-[2px] text-[9px]">BUY</span>
        </div>
      </div>
    </div>
  );
}

function RangeBar() {
  return (
    <div className="flex h-[34px] items-center rounded-b-[4px] bg-white text-[12px] text-[#131722]">
      <div className="ml-[14px] flex w-[236px] gap-[11px]">
        <span>1D</span><span>5D</span><span>1M</span><span>3M</span><span>6M</span><span>YTD</span><span>1Y</span><span>5Y</span><span>All</span>
      </div>
      <div className="ml-[8px] h-[20px] w-px bg-[#e0e3eb]" />
      <svg viewBox="0 0 16 17" className="ml-[12px] h-[17px] w-[16px]" fill="none" stroke="#131722">
        <path d="M1 9V3h14v13H6M1 6h14M4.500 1v3M11.500 1v3M1 13h6M5 11l2 2-2 2" />
      </svg>
      <span className="ml-auto mr-[10px]">04:52:43 (UTC+3:30)</span>
    </div>
  );
}

function BottomBar() {
  return (
    <div className="flex h-[33px] items-center rounded-t-[4px] border-b border-[#e0e3eb] bg-white pl-[13px] pt-[1px] text-[12px] text-[#131722]">
      <span className="w-[86px] whitespace-nowrap">Stock Screener</span>
      <ChevronDown size={10} strokeWidth={1.5} className="ml-[10px]" />
      <span className="ml-[19px] w-[60px] whitespace-nowrap">Pine Editor</span>
      <span className="ml-[28px] w-[85px] whitespace-nowrap">Strategy Tester</span>
      <span className="ml-[28px] w-[82px] whitespace-nowrap">Replay Trading</span>
      <span className="ml-[29px] whitespace-nowrap">Trading Panel</span>
      <ChevronUp size={18} strokeWidth={1} className="ml-auto" />
      <svg viewBox="0 0 14 14" className="ml-[14px] mr-[9px] h-[14px] w-[14px]" fill="none" stroke="#131722">
        <path d="M1 4V2.500A1.500 1.500 0 012.500 1h9A1.500 1.500 0 0113 2.500V4M1 10v1.500A1.500 1.500 0 002.500 13h9a1.500 1.500 0 001.500-1.500V10" />
      </svg>
    </div>
  );
}

function FloatingBar() {
  return (
    <div className="absolute bottom-0 left-0 z-10 flex h-[33px] w-[86px] items-center rounded-[6px] bg-white shadow-[0_1px_4px_rgba(0,0,0,0.25)]">
      <div className="ml-[7px] grid grid-cols-2 gap-x-[3px] gap-y-[3px]">
        {[0, 1, 2, 3, 4, 5].map((n) => (
          <span key={n} className="h-[2px] w-[2px] bg-[#b2b5be]" />
        ))}
      </div>
      <svg viewBox="0 0 20 20" className="ml-[14px] h-[20px] w-[20px]" fill="none" stroke="#131722">
        <path d="M2 11L18 4v5L2 16zM2 16v3L18 13V9" />
        <circle cx="2" cy="11" r="1.500" fill="#fff" /><circle cx="18" cy="4" r="1.500" fill="#fff" />
      </svg>
      <svg viewBox="0 0 10 18" className="ml-[8px] h-[18px] w-[10px]" fill="none" stroke="#131722">
        <path d="M2 1v14M2 3h5v3H2M2 7h8v3H2" />
        <circle cx="2" cy="16" r="1.500" />
      </svg>
      <svg viewBox="0 0 6 18" className="ml-[6px] h-[18px] w-[6px]" fill="none" stroke="#131722">
        <circle cx="3" cy="2.500" r="1.500" />
        <path d="M3 4v14" />
      </svg>
    </div>
  );
}

export default function App() {
  return (
    <div className="relative flex h-[720px] w-[960px] flex-col overflow-hidden bg-[#e0e3eb] blur-[0.35px] [font-family:Inter,'DejaVu_Sans',sans-serif]">
      <div className="bg-[#505155]">
        <StatusBar />
        <SafariBar />
      </div>
      <TabsBar />
      <TVHeader />
      <div className="mt-[3px] flex min-h-0 flex-1 gap-[3px]">
        <LeftTools />
        <div className="flex w-[870px] shrink-0 flex-col gap-[3px]">
          <div className="bg-white">
            <div className="relative flex h-[524px] border-b border-[#e0e3eb]">
              <Chart />
              <Legend />
              <PriceAxis />
            </div>
            <RangeBar />
          </div>
          <BottomBar />
        </div>
        <RightTools />
      </div>
      <FloatingBar />
    </div>
  );
}
